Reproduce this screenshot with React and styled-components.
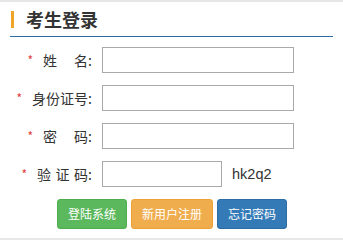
import React from 'react';
import styled, { createGlobalStyle } from 'styled-components';

const GlobalStyle = createGlobalStyle`
    body {
        margin: 0;
        background: #ffffff;
        font-family: "Microsoft YaHei", "Noto Sans CJK SC", "Noto Sans", sans-serif;
        color: #333333;
    }
`

const fields = [
    { parts: ['姓', '名'], spacer: 17, type: 'text' },
    { parts: ['身份证号'], spacer: 0, type: 'text' },
    { parts: ['密', '码'], spacer: 17, type: 'password' },
    { parts: ['验', '证', '码'], spacer: 4.5, type: 'text', captcha: 'hk2q2' },
]

const buttons = [
    { text: '登陆系统', kind: 'success' },
    { text: '新用户注册', kind: 'warning' },
    { text: '忘记密码', kind: 'primary' },
]

const App = () => {
    return (
        <>
            <GlobalStyle />
            <Panel>
                <Header>
                    <Bar />
                    <Title>考生登录</Title>
                </Header>
                <Form>
                    {
                        fields.map((f, index) => (
                            <Row key={index}>
                                <Label>
                                    <Star>*</Star>
                                    {f.parts.map((p, i) => (
                                        <React.Fragment key={i}>
                                            {i > 0 && <Gap $w={f.spacer} />}
                                            {p}
                                        </React.Fragment>
                                    ))}
                                    :
                                </Label>
                                <Control>
                                    <Input type={f.type} $short={!!f.captcha} />
                                    {f.captcha && <Captcha>{f.captcha}</Captcha>}
                                </Control>
                            </Row>
                        ))
                    }
                    <Actions>
                        {
                            buttons.map((b, index) => (
                                <Button key={index} $kind={b.kind}>{b.text}</Button>
                            ))
                        }
                    </Actions>
                </Form>
            </Panel>
        </>
    );
}

const Panel = styled.div`
    width: 343px;
    height: 240px;
    box-sizing: border-box;
    border-top: 2px solid #e6e6e6;
    border-bottom: 2px solid #e8e8e8;
    padding: 0 10px;
`

const Header = styled.div`
    display: flex;
    align-items: center;
    height: 34px;
    border-bottom: 1px solid #2e6da4;
`

const Bar = styled.span`
    width: 3px;
    height: 17px;
    margin-left: 1px;
    margin-top: 1px;
    background-color: #f0a529;
`

const Title = styled.h2`
    margin: 0 0 0 12px;
    font-size: 18px;
    font-weight: bold;
    line-height: 18px;
    color: #333333;
`

const Form = styled.div`
    display: flex;
    flex-direction: column;
    gap: 12px;
    padding-top: 10px;
`

const Row = styled.div`
    display: grid;
    grid-template-columns: 82px 1fr;
    column-gap: 10px;
    align-items: center;
`

const Label = styled.label`
    display: flex;
    align-items: center;
    justify-content: flex-end;
    font-size: 14px;
    color: #333333;
    white-space: nowrap;
`

const Star = styled.span`
    color: #e4393c;
    font-size: 12px;
    margin-right: 10px;
    position: relative;
    top: -1px;
`

const Gap = styled.span`
    display: inline-block;
    width: ${p => p.$w}px;
`

const Control = styled.div`
    display: flex;
    align-items: center;
`

const Input = styled.input`
    box-sizing: border-box;
    width: ${p => p.$short ? '120px' : '192px'};
    height: 26px;
    margin: 0;
    padding: 0 4px;
    border: 1px solid #a9a9a9;
    outline: none;
    background: #ffffff;
`

const Captcha = styled.span`
    margin-left: 10px;
    font-family: "Liberation Sans", Arial, sans-serif;
    font-size: 14.5px;
    color: #333333;
`

const colors = {
    success: ['#5cb85c', '#4cae4c'],
    warning: ['#f0ad4e', '#eea236'],
    primary: ['#337ab7', '#2e6da4'],
}

const Actions = styled.div`
    display: flex;
    justify-content: center;
    gap: 4px;
    margin-left: 1px;
`

const Button = styled.button`
    box-sizing: border-box;
    height: 30px;
    padding: 5px 10px;
    font-family: inherit;
    font-size: 12px;
    line-height: 18px;
    color: #ffffff;
    background-color: ${p => colors[p.$kind][0]};
    border: 1px solid ${p => colors[p.$kind][1]};
    border-radius: 3px;
    cursor: pointer;
`

export default App;
